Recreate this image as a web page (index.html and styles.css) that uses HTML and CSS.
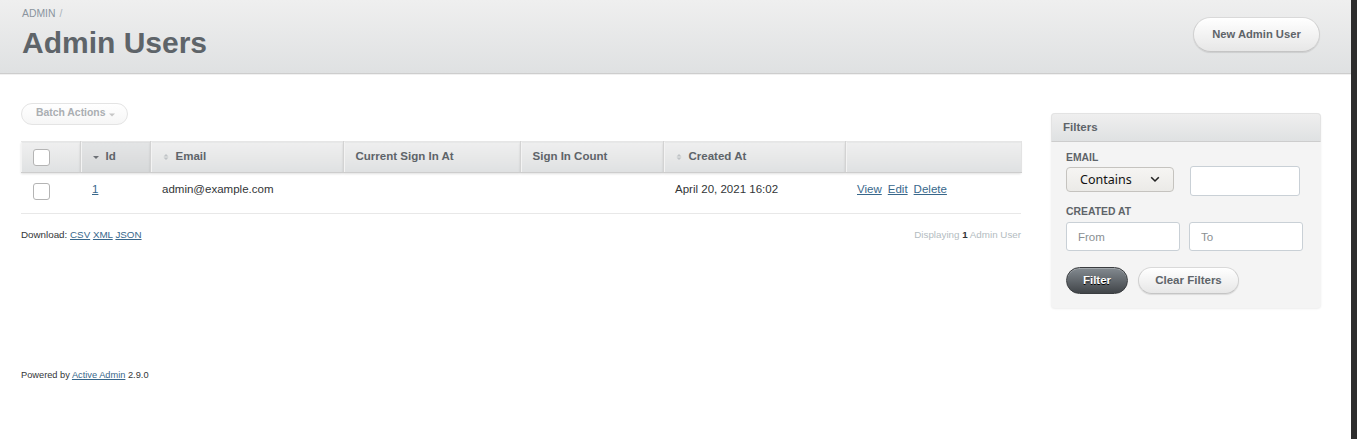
FILE: index.html
```html
<!DOCTYPE html>
<html>
<head>
<meta charset="utf-8">
<title>Admin Users</title>
<link rel="stylesheet" href="styles.css">
</head>
<body>
<div class="page">
  <div class="title-bar">
    <div class="title-left">
      <div class="breadcrumb"><a href="#">ADMIN</a><span class="sep">/</span></div>
      <h2 class="page-title">Admin Users</h2>
    </div>
    <a class="btn btn-light btn-new" href="#">New Admin User</a>
  </div>

  <div class="main">
    <div class="content">
      <div class="batch-row">
        <span class="btn-batch">Batch Actions <svg class="caret" width="6" height="4" viewBox="0 0 6 4"><path d="M0 0.5h6L3 3.5z" fill="#c6c6c6"/></svg></span>
      </div>

      <table class="index-table">
        <colgroup>
          <col style="width:59px"><col style="width:70px"><col style="width:193px"><col style="width:177px"><col style="width:143px"><col style="width:182px"><col style="width:176px">
        </colgroup>
        <thead>
          <tr>
            <th class="col-check"><span class="cbox"></span></th>
            <th class="sorted"><svg class="sort" width="6" height="8" viewBox="0 0 6 8"><path d="M0 3h6L3 6z" fill="#6d7176"/></svg>Id</th>
            <th><svg class="sort" width="6" height="8" viewBox="0 0 6 8"><path d="M0.5 3.5h5L3 1z M0.5 4.5h5L3 7z" fill="#bfc3c6"/></svg>Email</th>
            <th>Current Sign In At</th>
            <th>Sign In Count</th>
            <th><svg class="sort" width="6" height="8" viewBox="0 0 6 8"><path d="M0.5 3.5h5L3 1z M0.5 4.5h5L3 7z" fill="#bfc3c6"/></svg>Created At</th>
            <th></th>
          </tr>
        </thead>
        <tbody>
          <tr>
            <td class="col-check"><span class="cbox"></span></td>
            <td><a href="#">1</a></td>
            <td>admin@example.com</td>
            <td></td>
            <td></td>
            <td>April 20, 2021 16:02</td>
            <td class="actions"><a href="#">View</a><a href="#">Edit</a><a href="#">Delete</a></td>
          </tr>
        </tbody>
      </table>

      <div class="under-table">
        <div class="download">Download: <a href="#">CSV</a> <a href="#">XML</a> <a href="#">JSON</a></div>
        <div class="displaying">Displaying <b>1</b> Admin User</div>
      </div>
    </div>

    <aside class="sidebar">
      <div class="panel">
        <h3 class="panel-title">Filters</h3>
        <div class="panel-body">
          <div class="field">
            <label class="field-label">EMAIL</label>
            <div class="field-row email-row">
              <div class="select-wrap">
                <select class="select"><option>Contains</option></select>
                <svg class="chev" width="10" height="7" viewBox="0 0 10 7"><path d="M1.2 1.3L5 5l3.8-3.7" fill="none" stroke="#222" stroke-width="1.6"/></svg>
              </div>
              <input class="input input-email" type="text">
            </div>
          </div>
          <div class="field">
            <label class="field-label">CREATED AT</label>
            <div class="field-row date-row">
              <input class="input input-date" type="text" placeholder="From">
              <input class="input input-date" type="text" placeholder="To">
            </div>
          </div>
          <div class="buttons">
            <span class="btn btn-dark">Filter</span>
            <span class="btn btn-light btn-clear">Clear Filters</span>
          </div>
        </div>
      </div>
    </aside>
  </div>

  <div class="footer">Powered by <a href="#">Active Admin</a> 2.9.0</div>
</div>
<div class="strip"></div>
</body>
</html>
```

FILE: styles.css
```css
* { box-sizing: border-box; }

html, body { margin: 0; padding: 0; height: 100%; }

body {
  display: flex;
  font-family: "Liberation Sans", Arial, sans-serif;
  font-size: 11.52px;
  line-height: 1.5;
  color: #323537;
  background: #fff;
}

.page { flex: 1; min-width: 0; background: #fff; }

.strip { width: 6px; background: #2d2d2d; flex: none; }

a { color: #38678b; }

/* title bar */
.title-bar {
  display: flex;
  justify-content: space-between;
  align-items: flex-start;
  height: 74px;
  padding: 7px 31px 0 22px;
  background: linear-gradient(180deg, #efefef 0%, #dfe1e2 100%);
  border-bottom: 1px solid #cdcdcd;
  box-shadow: 0 1px 0 #f1f1f1;
}

.breadcrumb {
  font-size: 10.4px;
  line-height: 14px;
  color: #8a949e;
}
.breadcrumb a { color: #8a949e; text-decoration: none; }
.breadcrumb .sep { margin-left: 4px; color: #aab3bb; }

.page-title {
  margin: 4px 0 0;
  font-size: 30px;
  line-height: 36px;
  font-weight: bold;
  color: #5e6469;
}

.btn {
  display: inline-flex;
  align-items: center;
  justify-content: center;
  border-radius: 200px;
  font-weight: bold;
  font-size: 11.2px;
  text-decoration: none;
  white-space: nowrap;
}

.btn-light {
  color: #5e6469;
  background: linear-gradient(180deg, #ffffff 0%, #e7e7e7 100%);
  border: 1px solid #d0d0d0;
  border-color: #d9d9d9 #d0d0d0 #c5c5c5;
  box-shadow: 0 1px 1px rgba(0,0,0,0.10), inset 0 1px 0 #fff;
}

.btn-new {
  margin-top: 10px;
  width: 127px;
  height: 35px;
}

/* main */
.main {
  display: flex;
  gap: 30px;
  padding: 29px 30px 0 21px;
}

.content { width: 1000px; flex: none; }

.batch-row { height: 38px; }

.btn-batch {
  display: inline-flex;
  align-items: center;
  gap: 4px;
  width: 107px;
  height: 22px;
  padding-left: 14px;
  border: 1px solid #e4e4e4;
  border-radius: 200px;
  background: linear-gradient(180deg, #ffffff 0%, #f6f6f6 100%);
  color: #aaaeb2;
  font-weight: bold;
  font-size: 10.4px;
  line-height: 1;
  padding-bottom: 1px;
}
.btn-batch .caret { margin-top: 2px; }

/* table */
.index-table {
  width: 1000px;
  border-collapse: collapse;
  table-layout: fixed;
}

.index-table th {
  height: 31px;
  padding: 0 12px;
  text-align: left;
  font-weight: bold;
  color: #5e6469;
  white-space: nowrap;
  background: linear-gradient(180deg, #efefef 0%, #dfe1e2 100%);
  border-top: 1px solid #e6e6e6;
  border-right: 1px solid #d3d3d3;
  border-bottom: 1px solid #cdcdcd;
  box-shadow: inset 1px 0 0 #f3f3f3, 0 1px 2px rgba(0,0,0,0.12);
}
.index-table th:last-child { border-right: 1px solid #e3e3e3; }
.index-table th.sorted { background: linear-gradient(180deg, #e4e5e6 0%, #d6d8d9 100%); }

.index-table th .sort { margin-right: 7px; vertical-align: -1px; }

.index-table td {
  height: 41px;
  padding: 8px 12px 0;
  border-bottom: 1px solid #e8e8e8;
  vertical-align: top;
  white-space: nowrap;
}

.index-table th.col-check { padding-left: 12px; }
.index-table td.col-check { padding: 10px 12px 0; }

.cbox {
  display: block;
  width: 17px;
  height: 17px;
  border: 1px solid #b4b4b4;
  border-radius: 3px;
  background: #fff;
}

.actions a { margin-right: 6px; }

.under-table {
  display: flex;
  justify-content: space-between;
  align-items: center;
  margin-top: 14px;
  font-size: 9.8px;
}
.download { color: #323537; }
.displaying { color: #b3bcc1; }
.displaying b { color: #323537; }

/* sidebar */
.sidebar { width: 270px; flex: none; padding-top: 10px; }

.panel {
  background: #f4f4f4;
  border-radius: 4px;
  box-shadow: 0 1px 2px rgba(0,0,0,0.08);
}

.panel-title {
  margin: 0;
  height: 29px;
  padding: 0 11px;
  display: flex;
  align-items: center;
  font-size: 11.52px;
  font-weight: bold;
  color: #5e6469;
  background: linear-gradient(180deg, #efefef 0%, #dfe1e2 100%);
  border: 1px solid #e3e3e3;
  border-bottom: 1px solid #cdcdcd;
  border-radius: 4px 4px 0 0;
}

.panel-body { padding: 8px 15px 14px; }

.field { margin-bottom: 8px; }

.field-label {
  display: block;
  font-size: 10.4px;
  font-weight: bold;
  color: #5e6469;
  line-height: 15px;
}

.field-row { display: flex; align-items: flex-start; }
.email-row { gap: 16px; margin-top: 2px; }
.email-row .input { margin-top: -1px; }
.date-row { gap: 9px; margin-top: 3px; }

.select-wrap { position: relative; width: 108px; height: 25px; }
.select {
  appearance: none;
  -webkit-appearance: none;
  width: 108px;
  height: 25px;
  padding: 0 0 0 13px;
  font-family: "Noto Sans", "DejaVu Sans", sans-serif;
  font-size: 12.5px;
  color: #111;
  background: linear-gradient(180deg, #f6f5f3 0%, #ebeae7 100%);
  border: 1px solid #c5c3bf;
  border-radius: 4px;
}
.chev { position: absolute; right: 14px; top: 9px; }

.input {
  display: block;
  height: 30px;
  border: 1px solid #c9d0d6;
  border-radius: 3px;
  background: #fff;
  padding: 0 11px;
  font-family: "Liberation Sans", Arial, sans-serif;
  font-size: 11.52px;
  color: #5e6469;
}
.input::placeholder { color: #8a8f93; }
.input-email { width: 110px; }
.input-date { width: 114px; height: 29px; }

.buttons { display: flex; gap: 10px; margin-top: 16px; }

.btn-dark {
  width: 62px;
  height: 27px;
  color: #fff;
  background: linear-gradient(180deg, #838a90 0%, #414549 100%);
  border: 1px solid #3a3d40;
  text-shadow: 0 1px 0 #000;
  box-shadow: inset 0 1px 0 rgba(255,255,255,0.25);
  font-size: 11.52px;
}

.btn-clear { width: 101px; height: 27px; font-size: 11.52px; }

/* footer */
.footer {
  padding: 61px 21px 0;
  font-size: 9.25px;
  color: #323537;
}
```
